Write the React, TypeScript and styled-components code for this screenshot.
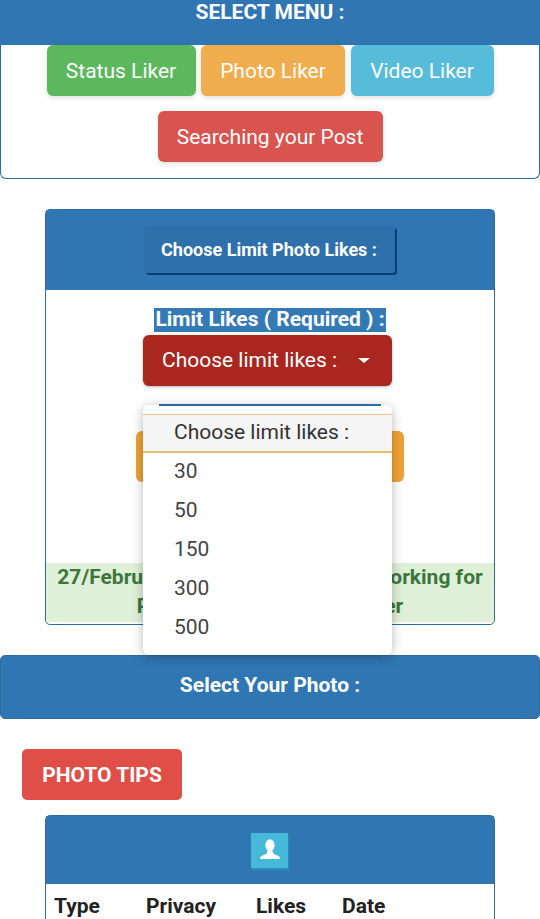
import React from "react";
import styled, { createGlobalStyle } from "styled-components";

const GlobalStyle = createGlobalStyle`
  html, body {
    margin: 0;
    padding: 0;
    background: #fff;
    height: 919px;
    overflow: hidden;
  }
  body {
    font-family: Roboto, "Liberation Sans", sans-serif;
  }
  * { box-sizing: border-box; }
`;

const BLUE = "#3076b2";
const BLUE_BORDER = "#2e6da4";

const Page = styled.div`
  width: 540px;
  height: 919px;
  overflow: hidden;
`;

const MenuPanel = styled.section`
  height: 179px;
  border: 1.5px solid ${BLUE_BORDER};
  border-top: 0;
  border-radius: 0 0 6px 6px;
  margin-bottom: 30px;
`;

const MenuHeader = styled.div`
  height: 45px;
  margin: 0 -1.5px;
  background: ${BLUE};
  color: #fff;
  font-size: 21px;
  font-weight: 700;
  line-height: 25px;
  text-align: center;
`;

const MenuRow = styled.div`
  display: flex;
  justify-content: center;
  gap: 5.5px;
  margin-bottom: 15px;
`;

const Btn = styled.button<{ $bg: string; $w: number }>`
  width: ${(p) => p.$w}px;
  height: 51px;
  padding: 0;
  border: 0;
  border-radius: 6px;
  background: ${(p) => p.$bg};
  color: #fff;
  font-family: inherit;
  font-size: 21px;
  line-height: 48px;
  box-shadow: 0 2px 5px rgba(0, 0, 0, 0.12);
`;

const LikesPanel = styled.section`
  position: relative;
  height: 416px;
  margin: 0 45px 30px;
  border: 1.5px solid ${BLUE_BORDER};
  border-radius: 5px;
  display: flex;
  flex-direction: column;
  align-items: center;
`;

const PanelHeader = styled.div<{ $h: number }>`
  flex: none;
  align-self: stretch;
  height: ${(p) => p.$h}px;
  background: ${BLUE};
  display: flex;
  align-items: center;
  justify-content: center;
`;

const LimitTitle = styled.div`
  width: 251px;
  height: 47px;
  margin-top: -1px;
  margin-left: -2px;
  border-radius: 3px;
  background: #2d70ab;
  box-shadow: 2px 2px 0 #063f75;
  color: #fff;
  font-size: 18px;
  font-weight: 700;
  line-height: 47px;
  text-align: center;
`;

const RequiredLabel = styled.label`
  margin-top: 18px;
  height: 24px;
  padding: 0 1px;
  background: #337ab7;
  color: #fff;
  font-size: 21px;
  font-weight: 700;
  line-height: 22px;
`;

const SelectWrap = styled.div`
  position: relative;
  z-index: 2;
  width: 249px;
  margin-top: 3px;
  margin-left: -5px;
`;

const SelectBtn = styled.div`
  height: 51px;
  padding-left: 19px;
  border-radius: 6px;
  background: #a9271f;
  box-shadow: 0 1px 3px rgba(0, 0, 0, 0.3);
  color: #fff;
  font-size: 21px;
  line-height: 49px;
  display: flex;
  align-items: center;
`;

const Caret = styled.span`
  width: 0;
  height: 0;
  margin-left: 21px;
  border-top: 5px solid #fff;
  border-left: 6px solid transparent;
  border-right: 6px solid transparent;
`;

const Dropdown = styled.ul`
  position: absolute;
  top: 70px;
  left: 0;
  width: 249px;
  height: 250px;
  margin: 0;
  padding: 9px 0 0;
  list-style: none;
  background: #fff;
  border-radius: 6px;
  box-shadow: 0 2px 12px rgba(0, 0, 0, 0.28);
`;

const Option = styled.li<{ $active?: boolean }>`
  height: 39px;
  padding-left: 31px;
  color: ${(p) => (p.$active ? "#333" : "#444")};
  font-size: 21px;
  line-height: 36px;
  ${(p) =>
    p.$active &&
    `
    background: #f5f5f5;
    border-top: 1px solid #e3c98a;
    border-bottom: 2px solid #dcc070;
    line-height: 34px;
  `}
`;

const HiddenField = styled.div`
  position: relative;
  z-index: 3;
  width: 222px;
  height: 2px;
  margin-top: 18px;
  margin-left: -1px;
  background: ${BLUE_BORDER};
  flex: none;
`;

const OrangeBtn = styled.div`
  width: 268px;
  height: 51px;
  margin-top: 25px;
  border-radius: 6px;
  background: #eea236;
  flex: none;
`;

const Notice = styled.div`
  align-self: stretch;
  height: 59px;
  margin-top: 81px;
  background: #dff0d8;
  color: #3c763d;
  font-size: 21px;
  font-weight: 700;
  line-height: 29px;
  text-align: center;
  white-space: nowrap;
`;

const PhotoBar = styled.div`
  height: 64px;
  margin-bottom: 30px;
  border: 1px solid ${BLUE_BORDER};
  border-radius: 5px;
  background: ${BLUE};
  color: #fff;
  font-size: 21px;
  font-weight: 700;
  line-height: 58px;
  text-align: center;
`;

const TipsBtn = styled.button`
  display: block;
  width: 160px;
  height: 51px;
  margin: 0 0 15px 22px;
  padding: 0;
  border: 0;
  border-radius: 5px;
  background: #df4f47;
  color: #fff;
  font-family: inherit;
  font-size: 21px;
  font-weight: 700;
  line-height: 48px;
`;

const PhotoPanel = styled.section`
  margin: 0 45px;
  border: 1.5px solid ${BLUE_BORDER};
  border-radius: 5px;
`;

const UserBadge = styled.div`
  width: 37px;
  height: 35px;
  margin-left: -1px;
  background: #46b8da;
  box-shadow: 1px 2px 0 #2b8fb5;
  display: flex;
  align-items: center;
  justify-content: center;
`;

const TableHead = styled.div`
  display: grid;
  grid-template-columns: 92px 110px 86px 1fr;
  padding: 9px 8px;
  color: #222;
  font-size: 21px;
  font-weight: 700;
  line-height: 26px;
`;

const limits = ["30", "50", "150", "300", "500"];

export default function App() {
  return (
    <Page>
      <GlobalStyle />
      <MenuPanel>
        <MenuHeader>SELECT MENU :</MenuHeader>
        <MenuRow>
          <Btn $bg="#5cb85c" $w={149}>Status Liker</Btn>
          <Btn $bg="#f0ad4e" $w={144}>Photo Liker</Btn>
          <Btn $bg="#56bcd9" $w={143}>Video Liker</Btn>
        </MenuRow>
        <MenuRow>
          <Btn $bg="#d9534f" $w={225}>Searching your Post</Btn>
        </MenuRow>
      </MenuPanel>

      <LikesPanel>
        <PanelHeader $h={80}>
          <LimitTitle>Choose Limit Photo Likes :</LimitTitle>
        </PanelHeader>
        <RequiredLabel>Limit Likes ( Required ) :</RequiredLabel>
        <SelectWrap>
          <SelectBtn>
            Choose limit likes :<Caret />
          </SelectBtn>
          <Dropdown>
            <Option $active>Choose limit likes :</Option>
            {limits.map((n) => (
              <Option key={n}>{n}</Option>
            ))}
          </Dropdown>
        </SelectWrap>
        <HiddenField />
        <OrangeBtn />
        <Notice>
          27/February/2019 : Photos Likes Working for
          <br />
          Photo Liker and Status Liker
        </Notice>
      </LikesPanel>

      <PhotoBar>Select Your Photo :</PhotoBar>
      <TipsBtn>PHOTO TIPS</TipsBtn>

      <PhotoPanel>
        <PanelHeader $h={68}>
          <UserBadge>
            <svg width="22" height="22" viewBox="0 0 21 21" fill="#fff">
              <ellipse cx="10.5" cy="6" rx="4.4" ry="5.8" />
              <path d="M8 11h5l.6 2.9 5.4 2.6c.6.4 1 1.2 1 2.5H1c0-1.3.4-2.1 1-2.5l5.4-2.6z" />
            </svg>
          </UserBadge>
        </PanelHeader>
        <TableHead>
          <span>Type</span>
          <span>Privacy</span>
          <span>Likes</span>
          <span>Date</span>
        </TableHead>
      </PhotoPanel>
    </Page>
  );
}
